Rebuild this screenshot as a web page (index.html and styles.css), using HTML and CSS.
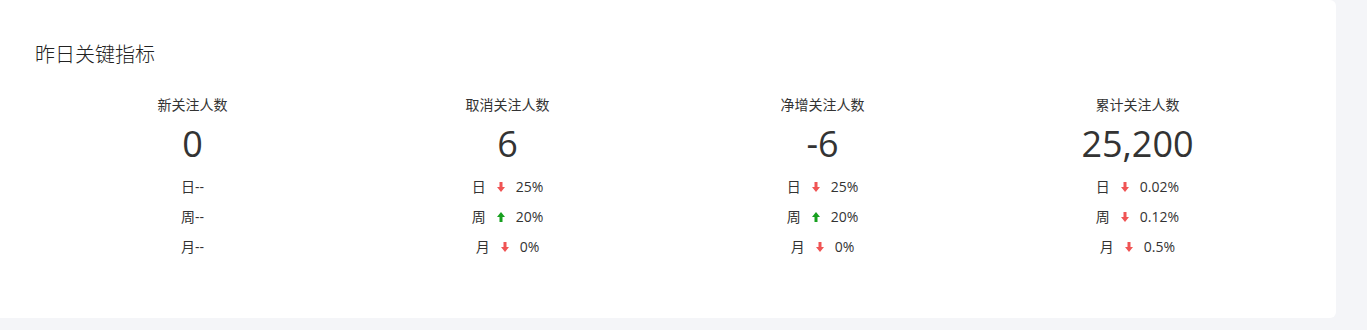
FILE: index.html
```html
<!DOCTYPE html>
<html lang="zh-CN">

<head>
  <meta charset="UTF-8">
  <title>昨日关键指标</title>
  <link rel="stylesheet" href="styles.css">
</head>

<body>

  <div class="card">
    <h2 class="card-title">昨日关键指标</h2>

    <div class="metrics">
      <!-- 新关注 -->
      <div class="metric">
        <div class="metric-label">新关注人数</div>
        <div class="metric-value">0</div>
        <div class="metric-row">日--</div>
        <div class="metric-row">周--</div>
        <div class="metric-row">月--</div>
      </div>

      <!-- 取消关注 -->
      <div class="metric">
        <div class="metric-label">取消关注人数</div>
        <div class="metric-value">6</div>
        <div class="metric-row">日<svg class="arrow down" viewBox="0 0 8 10"><path d="M2.5 0h3v5h2.5l-4 5-4-5h2.5z" /></svg>25%</div>
        <div class="metric-row">周<svg class="arrow up" viewBox="0 0 8 10"><path d="M2.5 10h3v-5h2.5l-4-5-4 5h2.5z" /></svg>20%</div>
        <div class="metric-row">月<svg class="arrow down" viewBox="0 0 8 10"><path d="M2.5 0h3v5h2.5l-4 5-4-5h2.5z" /></svg>0%</div>
      </div>

      <!-- 净增关注 -->
      <div class="metric">
        <div class="metric-label">净增关注人数</div>
        <div class="metric-value">-6</div>
        <div class="metric-row">日<svg class="arrow down" viewBox="0 0 8 10"><path d="M2.5 0h3v5h2.5l-4 5-4-5h2.5z" /></svg>25%</div>
        <div class="metric-row">周<svg class="arrow up" viewBox="0 0 8 10"><path d="M2.5 10h3v-5h2.5l-4-5-4 5h2.5z" /></svg>20%</div>
        <div class="metric-row">月<svg class="arrow down" viewBox="0 0 8 10"><path d="M2.5 0h3v5h2.5l-4 5-4-5h2.5z" /></svg>0%</div>
      </div>

      <!-- 累计关注 -->
      <div class="metric">
        <div class="metric-label">累计关注人数</div>
        <div class="metric-value">25,200</div>
        <div class="metric-row">日<svg class="arrow down" viewBox="0 0 8 10"><path d="M2.5 0h3v5h2.5l-4 5-4-5h2.5z" /></svg>0.02%</div>
        <div class="metric-row">周<svg class="arrow down" viewBox="0 0 8 10"><path d="M2.5 0h3v5h2.5l-4 5-4-5h2.5z" /></svg>0.12%</div>
        <div class="metric-row">月<svg class="arrow down" viewBox="0 0 8 10"><path d="M2.5 0h3v5h2.5l-4 5-4-5h2.5z" /></svg>0.5%</div>
      </div>
    </div>
  </div>

</body>

</html>
```

FILE: styles.css
```css
body {
  margin: 0;
  font-family: "Open Sans", "Noto Sans CJK SC", sans-serif;
  background: #f4f5f8;
  color: #333;
}

.card {
  margin: 0 31px 0 -8px;
  padding: 41px 41px 56px 43px;
  background: #fff;
  border-radius: 6px;
}

.card-title {
  margin: 0;
  font-size: 20px;
  line-height: 28px;
  font-weight: 300;
  color: #222;
}

.metrics {
  display: grid;
  grid-template-columns: repeat(4, 1fr);
  margin-top: 26px;
}

.metric {
  display: flex;
  flex-direction: column;
  align-items: center;
}

.metric-label {
  font-size: 14px;
  line-height: 20px;
}

.metric-value {
  margin: 7px 0 6px;
  font-size: 36px;
  line-height: 44px;
}

.metric-row {
  display: flex;
  align-items: center;
  font-size: 14px;
  line-height: 30px;
}

.arrow {
  width: 8px;
  height: 10px;
  margin: 0 11px;
}

.arrow.down {
  fill: #f05454;
}

.arrow.up {
  fill: #17a01f;
}
```
